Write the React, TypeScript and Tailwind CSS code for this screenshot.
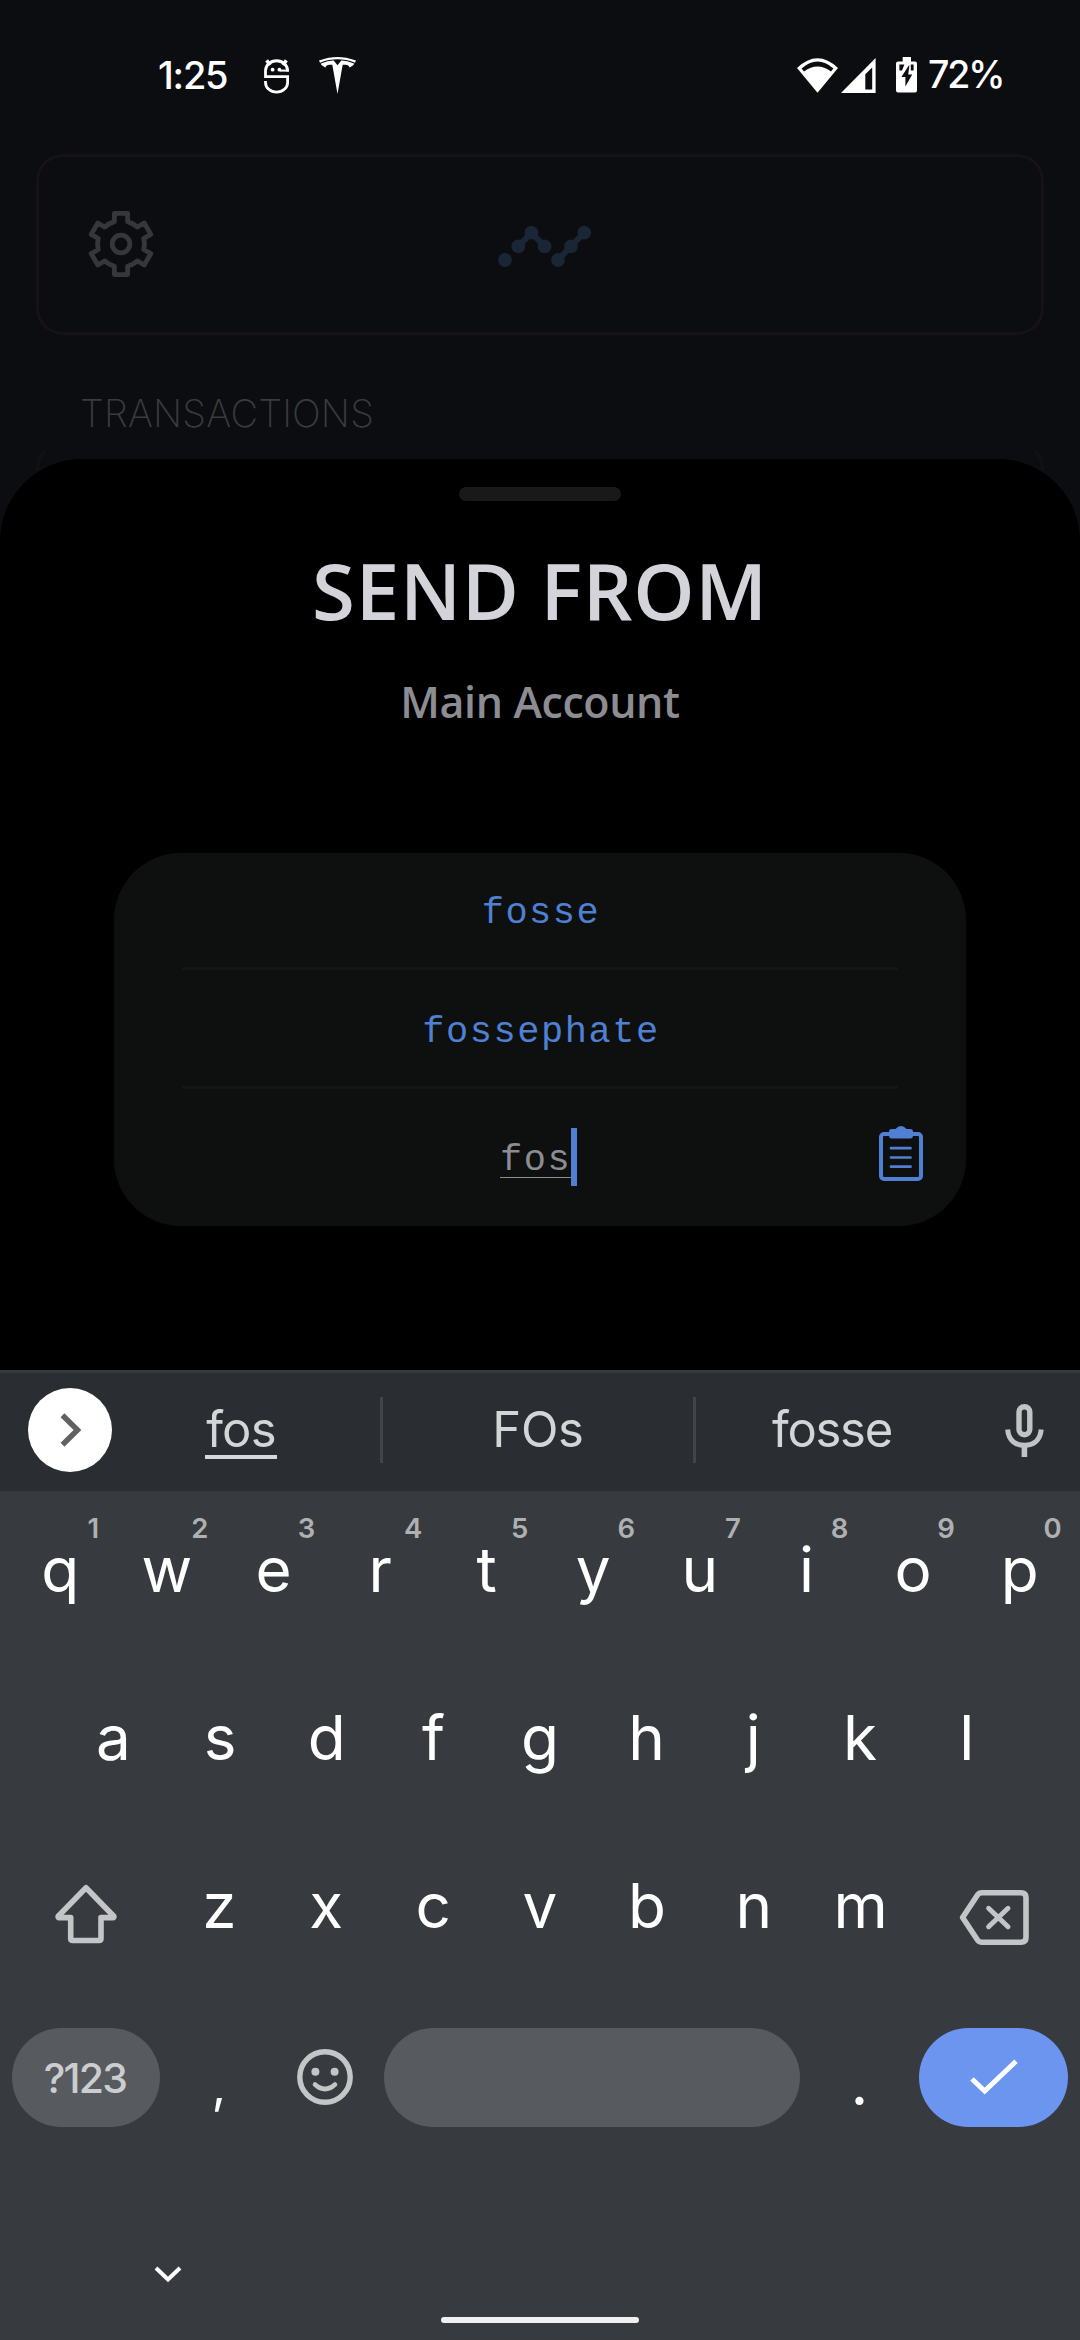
import React from "react";
import { SiTesla } from "react-icons/si";

function gearPath() {
  let d = "";
  for (let k = 0; k < 6; k++) {
    const a = (k * Math.PI) / 3;
    const p = (x: number, y: number) =>
      `${(33 + x * Math.cos(a) - y * Math.sin(a)).toFixed(2)} ${(33 + x * Math.sin(a) + y * Math.cos(a)).toFixed(2)}`;
    d += `${k === 0 ? "M" : "A23 23 0 0 1 "}${p(-6.6, -22.4)}L${p(-6.6, -30.6)}L${p(6.6, -30.6)}L${p(6.6, -22.4)}`;
  }
  return d + "A23 23 0 0 1 26.4 10.6Z";
}

function RobotIcon() {
  return (
    <svg width="25" height="37" viewBox="0 0 25 37" fill="none" stroke="#fff" strokeWidth="2.8">
      <path d="M23.6 14.6V13.6A11 9.8 0 0 0 1.5 13.6V19.6H23.6V25.5A11 9.6 0 0 1 1.5 25.5V24" />
      <path d="M24.800 13.600H16" strokeWidth="2" />
      <path d="M2.600 3.400L6.200 8M22.400 3.400L18.800 8" strokeWidth="3.6" />
      <circle cx="8.6" cy="12.7" r="1.9" fill="#fff" stroke="none" />
      <circle cx="15.4" cy="12.7" r="1.9" fill="#fff" stroke="none" />
    </svg>
  );
}

function StatusBar() {
  return (
    <div className="flex h-[154px] items-start justify-between pl-[158px] pr-[77px] pt-[52px] text-white">
      <div className="flex h-[46px] items-center">
        <span className="w-[106px] text-[38px] font-medium leading-[46px] tracking-[-1.2px]">1:25</span>
        <RobotIcon />
        <SiTesla className="ml-[30px] size-[37px]" />
      </div>
      <div className="flex h-[46px] items-center">
        <svg width="41" height="35" viewBox="0 0 41 35">
          <path d="M0 10Q20.5 -9.4 41 10L20.5 34.8Z" fill="#fff" />
          <path d="M4.6 10.4Q20.5 -3.4 36.4 10.4L34 13.4Q20.5 3.6 7 13.4Z" fill="#0c0d10" />
        </svg>
        <svg className="ml-[3px]" width="35" height="35" viewBox="0 0 35 35">
          <path fillRule="evenodd" d="M0 35H34.6V0ZM24.3 16.3L31.2 9.4V31.4H24.3Z" fill="#fff" />
        </svg>
        <svg className="ml-5" width="21" height="36" viewBox="0 0 21 36">
          <path d="M6.7 0H15V4.5H19A2 2 0 0 1 21 6.5V33.5A2 2 0 0 1 19 35.5H2A2 2 0 0 1 0 33.5V6.5A2 2 0 0 1 2 4.5H6.7Z" fill="#fff" />
          <path d="M3.4 7.5H8.4L6 13.6H3.4ZM14.8 7.5H17.6V13.6H14.8ZM12.8 8.4L5.4 20H9.4V29.4L16.2 17.6H12.2L13.4 8.4Z" fill="#0c0d10" />
        </svg>
        <span className="ml-[11px] w-[75px] whitespace-nowrap text-[37.5px] font-medium leading-[46px] tracking-[-2.2px]">72%</span>
      </div>
    </div>
  );
}

const dots = [[8, 34], [21.3, 20.3], [34.4, 6.7], [47.6, 20.3], [61, 34], [74, 20.3], [87.3, 6.7]];

function Backdrop() {
  return (
    <div className="px-9">
      <div className="flex h-[181px] items-center rounded-[27px] border-[3px] border-[#161215] pl-[49px]">
        <svg className="-mt-px" width="66" height="66" viewBox="0 0 66 66" fill="none" stroke="#36373a" strokeWidth="4.8" strokeLinejoin="round">
          <path d={gearPath()} />
          <circle cx="33" cy="33" r="8.8" />
        </svg>
        <svg className="ml-[343px] mt-1" width="95" height="41" viewBox="0 0 95 41">
          {dots.map(([x, y]) => (
            <circle key={x} cx={x} cy={y} r="6.9" fill="#1a2536" />
          ))}
          <path d="M21.3 20.3L34.4 6.7L47.6 20.3M61 34L74 20.3L87.3 6.7" fill="none" stroke="#1a2536" strokeWidth="6" />
        </svg>
      </div>
      <div className="mt-[55px] pl-[44px] text-[38px] font-extralight leading-[46px] tracking-[0.2px] text-[#3a3b3e]">TRANSACTIONS</div>
      <div className="mt-[6px] h-[200px] rounded-[27px] border-[3px] border-[#121013] border-t-transparent" />
    </div>
  );
}

function ClipboardIcon() {
  return (
    <svg className="absolute right-[43px] top-[37px]" width="44" height="55" viewBox="0 0 44 55" fill="none" stroke="#4f80d4">
      <rect x="2" y="8" width="40" height="45" rx="3" strokeWidth="4" />
      <path d="M12 22.2H31.5M12 31.5H31.5M12 40.7H31.5" strokeWidth="2.7" strokeLinecap="round" />
      <path d="M12.5 3H16.5Q19 0 22 0T27.500 3H31.500Q34 3.200 34 6V9.500Q34 12.500 31.500 12.500H12.500Q10 12.500 10 9.500V6Q10 3.200 12.500 3Z" fill="#4f80d4" stroke="none" />
    </svg>
  );
}

function Sheet() {
  return (
    <div className="absolute inset-x-0 top-[459px] flex h-[911px] flex-col items-center rounded-t-[82px] bg-black pt-7">
      <div className="h-[14px] w-[162px] rounded-[7px] bg-[#191919]" />
      <h1 className="mt-[36px] whitespace-nowrap font-['Open_Sans'] text-[78px] font-semibold leading-[106px] tracking-[0.7px] text-[#d3d3da]">SEND FROM</h1>
      <h2 className="mt-[29px] whitespace-nowrap font-['Open_Sans'] text-[43px] font-semibold leading-[60px] tracking-[-0.4px] text-[#8c8c93]">Main Account</h2>
      <div className="mt-[121px] w-[852px] rounded-[67px] bg-[#0e100f] px-[68px] text-center font-['Liberation_Mono'] text-[37px] tracking-[1.53px] text-[#4f80d4]">
        <div className="h-[117px] border-b-[3px] border-[#131516] pl-[2px] pt-[36px] leading-[48px]">fosse</div>
        <div className="h-[119px] border-b-[3px] border-[#131516] pl-[2px] pt-[38px] leading-[48px]">fossephate</div>
        <div className="relative -mx-[68px] flex h-[137px] pl-[386px] pt-[39px]">
          <span className="mt-[8px] h-[42px] w-[71px] whitespace-nowrap border-b border-[#8c8c93] leading-[48px] text-[#8c8c93]">fos</span>
          <span className="h-[58px] w-[6px] bg-[#4f80d4]" />
          <ClipboardIcon />
        </div>
      </div>
    </div>
  );
}

function SuggestionBar() {
  return (
    <div className="flex h-[121px] items-center border-t-[3px] border-[#36393e] bg-[#2a2d32] pb-[4px] pl-7 text-[49px] text-[#d4d5d7]">
      <div className="flex size-[84px] items-center justify-center rounded-full bg-white">
        <svg width="24" height="38" viewBox="0 0 24 38" fill="none" stroke="#616161" strokeWidth="5.4">
          <path d="M4.500 4.300L19.500 19L4.500 33.700" />
        </svg>
      </div>
      <div className="flex w-[268px] flex-col items-center pr-[10px]">
        <span className="mt-[4px] h-[54px] border-b-4 border-[#d4d9db] px-px leading-[50px] tracking-[-0.8px]">fos</span>
      </div>
      <div className="h-[66px] w-[3px] bg-[#414449]" />
      <div className="w-[310px] text-center leading-[54px] tracking-[-0.3px]">FOs</div>
      <div className="h-[66px] w-[3px] bg-[#414449]" />
      <div className="w-[272px] text-center leading-[54px] tracking-[-1.3px]">fosse</div>
      <svg className="ml-[37px]" width="39" height="53" viewBox="0 0 39 53" fill="none" stroke="#c1c3c5">
        <rect x="14" y="2.700" width="10.800" height="28" rx="5.400" strokeWidth="5.400" />
        <path d="M2.600 25.500C3.600 36.500 10.500 41.300 19.400 41.300S35.200 36.500 36.200 25.500" strokeWidth="5" />
        <path d="M19.400 41V53" strokeWidth="5.600" />
      </svg>
    </div>
  );
}

function Key({ label, hint }: { label: string; hint?: string }) {
  return (
    <div className="relative flex flex-1 items-center justify-center pb-[11px]">
      {label}
      {hint && <span className="absolute left-1/2 top-[20px] w-[66px] text-center text-[27.5px] font-semibold leading-[34px] text-[#aeb0b2]">{hint}</span>}
    </div>
  );
}

function Keyboard() {
  return (
    <div className="text-[62px] leading-[80px] text-white">
      <div className="flex h-[168px] px-[7px]">
        {"qwertyuiop".split("").map((k, i) => (
          <Key key={k} label={k} hint={String((i + 1) % 10)} />
        ))}
      </div>
      <div className="flex h-[168px] px-[60px]">
        {"asdfghjkl".split("").map((k) => (
          <Key key={k} label={k} />
        ))}
      </div>
      <div className="flex h-[168px] px-[7px]">
        <div className="flex w-[159px] items-center justify-center pt-[6px] pr-[2px]">
          <svg width="62" height="60" viewBox="0 0 62 60" fill="none" stroke="#c4c5c7" strokeWidth="5.600" strokeLinejoin="round">
            <path d="M31 3.800L3.200 32.200Q2.800 33.600 4.200 33.600H15.700V54.500Q15.700 56.500 17.700 56.500H44Q46 56.500 46 54.500V33.600H57.800Q59.200 33.600 58.800 32.200Z" />
          </svg>
        </div>
        {"zxcvbnm".split("").map((k) => (
          <Key key={k} label={k} />
        ))}
        <div className="flex w-[159px] items-center justify-center pt-[13px]">
          <svg width="70" height="55" viewBox="0 0 70 55" fill="none" stroke="#c4c5c7" strokeWidth="5.600" strokeLinejoin="round">
            <path d="M3.600 27.500L18.500 5Q20 2.800 23 2.800H62Q67 2.800 67 7.500V47.500Q67 52.200 62 52.200H23Q20 52.200 18.500 50Z" />
            <path d="M29.600 18.300L49 36.700M49 18.300L29.600 36.700" strokeWidth="5" strokeLinecap="round" />
          </svg>
        </div>
      </div>
      <div className="flex h-[168px] items-center pl-3 pr-3 pb-[3px]">
        <div className="flex h-[99px] w-[148px] items-center justify-center rounded-full bg-[#575a5e] pr-[2px] text-[41px] font-medium tracking-[-1.800px] text-[#cbcdcf]">?123</div>
        <div className="w-[118px] pt-[15px] text-center text-[50px]">,</div>
        <div className="flex w-[94px] justify-center">
          <svg className="-mt-px" width="56" height="56" viewBox="0 0 56 56" fill="none" stroke="#c4c5c7">
            <circle cx="28" cy="28" r="25.200" strokeWidth="5.400" />
            <circle cx="18.400" cy="22.800" r="4" fill="#c4c5c7" stroke="none" />
            <circle cx="37.600" cy="22.800" r="4" fill="#c4c5c7" stroke="none" />
            <path d="M18 35.500Q28 44.500 38 35.500" strokeWidth="4.600" strokeLinecap="round" />
          </svg>
        </div>
        <div className="ml-[12px] h-[99px] w-[416px] rounded-full bg-[#575a5e]" />
        <div className="w-[119px] pt-[11px] text-center">.</div>
        <div className="flex h-[99px] w-[149px] items-center justify-center rounded-full bg-[#6b95ee]">
          <svg width="48" height="37" viewBox="0 0 48 37" fill="none" stroke="#fff" strokeWidth="5">
            <path d="M2 20L14.700 32L46 2.200" />
          </svg>
        </div>
      </div>
      <div className="flex h-[177px] flex-col justify-between pb-[17px] pt-[102px]">
        <svg className="ml-[154px]" width="28" height="19" viewBox="0 0 28 19" fill="none" stroke="#fff" strokeWidth="4">
          <path d="M2 3L14 14.500L26 3" />
        </svg>
        <div className="h-[6px] w-[198px] self-center rounded-full bg-[#f0f0f0]" />
      </div>
    </div>
  );
}

export default function App() {
  return (
    <div className="relative h-[2340px] w-[1080px] overflow-hidden bg-[#0c0d10] font-['Inter']">
      <div className="h-[1370px] overflow-hidden">
        <StatusBar />
        <Backdrop />
      </div>
      <Sheet />
      <div className="h-[970px] bg-[#373a3f]">
        <SuggestionBar />
        <Keyboard />
      </div>
    </div>
  );
}
